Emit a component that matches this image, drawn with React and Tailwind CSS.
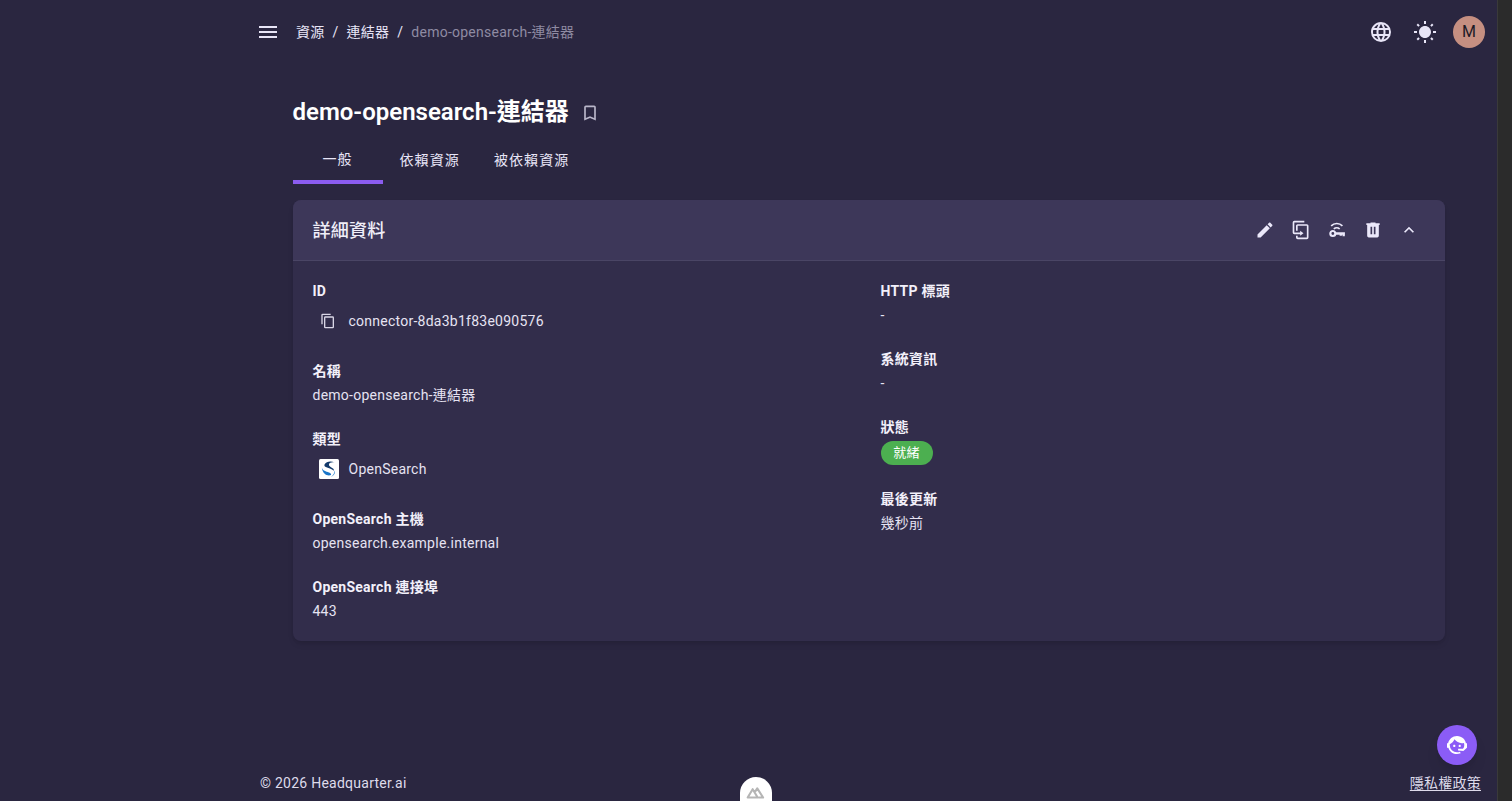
import React from 'react';

const FONT = "font-['Roboto','Noto_Sans_CJK_TC',sans-serif]";

const Mdi = ({ d, size = 24, className = '' }) => (
  <svg viewBox="0 0 24 24" width={size} height={size} fill="currentColor" className={className}>
    <path d={d} />
  </svg>
);

const paths = {
  menu: 'M3,6H21V8H3V6M3,11H21V13H3V11M3,16H21V18H3V16Z',
  web: 'M16.36,14C16.44,13.34 16.5,12.68 16.5,12C16.5,11.32 16.44,10.66 16.36,10H19.74C19.9,10.64 20,11.31 20,12C20,12.69 19.9,13.36 19.74,14M14.59,19.56C15.19,18.45 15.65,17.25 15.97,16H18.92C17.96,17.65 16.43,18.93 14.59,19.56M14.34,14H9.66C9.56,13.34 9.5,12.68 9.5,12C9.5,11.32 9.56,10.65 9.66,10H14.34C14.43,10.65 14.5,11.32 14.5,12C14.5,12.68 14.43,13.34 14.34,14M12,19.96C11.17,18.76 10.5,17.43 10.09,16H13.91C13.5,17.43 12.83,18.76 12,19.96M8,8H5.08C6.03,6.34 7.57,5.06 9.4,4.44C8.8,5.55 8.35,6.75 8,8M5.08,16H8C8.35,17.25 8.8,18.45 9.4,19.56C7.57,18.93 6.03,17.65 5.08,16M4.26,14C4.1,13.36 4,12.69 4,12C4,11.31 4.1,10.64 4.26,10H7.64C7.56,10.66 7.5,11.32 7.5,12C7.5,12.68 7.56,13.34 7.64,14M12,4.03C12.83,5.23 13.5,6.57 13.91,8H10.09C10.5,6.57 11.17,5.23 12,4.03M18.92,8H15.97C15.65,6.75 15.19,5.55 14.59,4.44C16.43,5.07 17.96,6.34 18.92,8M12,2C6.47,2 2,6.5 2,12A10,10 0 0,0 12,22A10,10 0 0,0 22,12A10,10 0 0,0 12,2Z',
  sun: 'M3.55 19.09L4.96 20.5L6.76 18.71L5.34 17.29M12 6C8.69 6 6 8.69 6 12S8.69 18 12 18 18 15.31 18 12C18 8.68 15.31 6 12 6M20 13H23V11H20M17.24 18.71L19.04 20.5L20.45 19.09L18.66 17.29M20.45 5L19.04 3.6L17.24 5.39L18.66 6.81M13 1H11V4H13M6.76 5.39L4.96 3.6L3.55 5L5.34 6.81L6.76 5.39M1 13H4V11H1M13 20H11V23H13',
  bookmark: 'M17,18L12,15.82L7,18V5H17M17,3H7A2,2 0 0,0 5,5V21L12,18L19,21V5C19,3.89 18.1,3 17,3Z',
  pencil: 'M20.71,7.04C21.1,6.65 21.1,6 20.71,5.63L18.37,3.29C18,2.9 17.35,2.9 16.96,3.29L15.12,5.12L18.87,8.87M3,17.25V21H6.75L17.81,9.93L14.06,6.18L3,17.25Z',
  duplicate: 'M11,17H4A2,2 0 0,1 2,15V3A2,2 0 0,1 4,1H16V3H4V15H11V13L15,16L11,19V17M19,21V7H8V13H6V7A2,2 0 0,1 8,5H19A2,2 0 0,1 21,7V21A2,2 0 0,1 19,23H8A2,2 0 0,1 6,21V19H8V21H19Z',
  trash: 'M9,3V4H4V6H5V19A2,2 0 0,0 7,21H17A2,2 0 0,0 19,19V6H20V4H15V3H9M9,8H11V17H9V8M13,8H15V17H13V8Z',
  chevron: 'M7.41,15.41L12,10.83L16.59,15.41L18,14L12,8L6,14L7.41,15.41Z',
  copy: 'M19,21H8V7H19M19,5H8A2,2 0 0,0 6,7V21A2,2 0 0,0 8,23H19A2,2 0 0,0 21,21V7A2,2 0 0,0 19,5M16,1H4A2,2 0 0,0 2,3V17H4V3H16V1Z',
  agent: 'M18.72,14.76C19.07,13.91 19.26,13 19.26,12C19.26,11.28 19.15,10.59 18.96,9.95C18.31,10.1 17.63,10.18 16.92,10.18C13.86,10.18 11.15,8.67 9.5,6.34C8.61,8.5 6.91,10.26 4.77,11.22C4.73,11.47 4.73,11.74 4.73,12A7.27,7.27 0 0,0 12,19.27C13.05,19.27 14.06,19.04 14.97,18.63C15.54,19.72 15.8,20.26 15.78,20.26C14.14,20.81 12.87,21.08 12,21.08C9.58,21.08 7.27,20.13 5.57,18.42C4.53,17.38 3.76,16.11 3.33,14.73H2V10.18H3.09C3.93,6.04 7.6,2.92 12,2.92C14.4,2.92 16.71,3.87 18.42,5.58C19.69,6.84 20.54,8.45 20.89,10.18H22V14.67V14.69L22,14.73H21.94L18.38,18L13.08,17.4V15.73H17.91L18.72,14.76M9.27,11.77C9.57,11.77 9.86,11.89 10.07,12.11C10.28,12.32 10.4,12.61 10.4,12.91C10.4,13.21 10.28,13.5 10.07,13.71C9.86,13.92 9.57,14.04 9.27,14.04C8.64,14.04 8.13,13.54 8.13,12.91C8.13,12.28 8.64,11.77 9.27,11.77M14.72,11.77C15.35,11.77 15.85,12.28 15.85,12.91C15.85,13.54 15.35,14.04 14.72,14.04C14.09,14.04 13.58,13.54 13.58,12.91A1.14,1.14 0 0,1 14.72,11.77Z',
};

const WifiKeyIcon = () => (
  <svg viewBox="0 0 24 24" width={20} height={20} fill="none" stroke="currentColor">
    <path strokeWidth="2" d="M5 7a9.500 9.500 0 0 1 13.500 0M8.200 10.800a5 5 0 0 1 7 0" />
    <circle cx="7" cy="16.200" r="3" strokeWidth="2.600" />
    <path strokeWidth="2.800" d="M10 16.200h11.500M20 16.200v3.400M16.500 16.200v2.600" />
  </svg>
);

const LABEL = 'text-sm font-bold leading-[20px] tracking-[0.25px] text-[#f2f0fa]';

const Field = ({ label, children, last = false }) => (
  <div className={last ? '' : 'mb-[24px]'}>
    <div className={LABEL}>{label}</div>
    <div className="mt-[4px] text-sm leading-[20px] tracking-[0.25px] text-[#e6e3f2]">{children}</div>
  </div>
);

const IconField = ({ label, icon, text }) => (
  <div className="mb-[24px]">
    <div className={LABEL}>{label}</div>
    <div className="mt-[4px] flex h-[32px] items-center pl-[7px] text-sm tracking-[0.25px] text-[#e6e3f2]">
      <span className="flex w-[29px] shrink-0 justify-start">{icon}</span>
      {text}
    </div>
  </div>
);

export default function App() {
  return (
    <div className={`flex h-[801px] w-[1512px] overflow-hidden bg-[#2a2640] ${FONT}`}>
      <div className="relative flex min-w-0 flex-1 flex-col pl-[245px]">
        {/* top bar */}
        <header className="flex h-[64px] shrink-0 items-center justify-between pl-[11px] pr-[12px] text-[#e8e5f7]">
          <div className="flex items-center">
            <Mdi d={paths.menu} />
            <nav className="ml-[16px] flex items-center text-sm tracking-[0.25px]">
              <span>資源</span>
              <span className="mx-[8px]">/</span>
              <span>連結器</span>
              <span className="mx-[8px]">/</span>
              <span className="text-[#8f8ba3]">demo-opensearch-連結器</span>
            </nav>
          </div>
          <div className="flex items-center">
            <Mdi d={paths.web} />
            <Mdi d={paths.sun} className="ml-[20px]" />
            <div className="ml-[16px] flex h-[32px] w-[32px] items-center justify-center rounded-full bg-[#c58f81] text-base text-[#1c1a26]">M</div>
          </div>
        </header>

        <main className="flex-1 pl-[47.5px] pr-[52px]">
          <div className="mt-[32px] flex items-center">
            <h1 className="text-2xl font-semibold leading-[32px] text-white">demo-opensearch-連結器</h1>
            <Mdi d={paths.bookmark} size={20} className="ml-[11px] mt-[2px] text-[#b9b6c9]" />
          </div>

          {/* tabs */}
          <div className="mt-[8px] flex h-[48px] text-sm tracking-[1.1px] text-[#e8e5f7]">
            <div className="flex w-[90px] items-center justify-center border-b-[4px] border-[#8b5cf0] pt-[2px]">一般</div>
            <div className="flex items-center px-[17px] pb-[1px]">依賴資源</div>
            <div className="flex items-center pl-[17px] pb-[1px]">被依賴資源</div>
          </div>

          {/* detail card */}
          <section className="mt-[16px] overflow-hidden rounded-[8px] bg-[#322d4b] shadow-md">
            <div className="flex h-[61px] items-center justify-between border-b border-[#4a4565] bg-[#3d3759] pl-[20px] pr-[26px]">
              <h2 className="pt-[1px] text-lg font-medium tracking-[0.25px] text-[#f0eef8]">詳細資料</h2>
              <div className="flex items-center gap-[16px] text-[#ebe8fa]">
                <Mdi d={paths.pencil} size={20} />
                <Mdi d={paths.duplicate} size={20} />
                <WifiKeyIcon />
                <Mdi d={paths.trash} size={20} />
                <Mdi d={paths.chevron} size={20} />
              </div>
            </div>
            <div className="grid grid-cols-[568px_1fr] pb-[20px] pl-[20px] pt-[20px]">
              <div>
                <IconField label="ID" icon={<Mdi d={paths.copy} size={16} className="text-[#d9d6e6]" />} text="connector-8da3b1f83e090576" />
                <Field label="名稱">demo-opensearch-連結器</Field>
                <IconField
                  label="類型"
                  icon={
                    <svg viewBox="0 0 20 20" width={20} height={20} className="-ml-[1px]">
                      <rect width="20" height="20" rx="1.500" fill="#fff" />
                      <path d="M5.500 5.500C7 2.500 12 1.500 15.500 3.500 12.500 3 10.500 3.800 10 5.200 9.500 7 12 8 14 9.500 14.800 10.200 15 11 14.700 11.800 13 9.500 9 9 6.800 8 5.500 7.400 5.200 6.500 5.500 5.500z" fill="#123a6b" />
                      <path d="M2.800 8.500C3.500 11.500 7 12.500 10 13.500 11.800 14.200 12.300 15 12 16 9 17.500 3.500 15.500 2.800 8.500z" fill="#1976c9" />
                      <path d="M15.500 11.500C16.500 13.500 15.500 16.500 12 17.800 14.500 16 15.500 14 15.500 11.500z" fill="#1976c9" />
                    </svg>
                  }
                  text="OpenSearch"
                />
                <Field label="OpenSearch 主機">opensearch.example.internal</Field>
                <Field label="OpenSearch 連接埠" last>443</Field>
              </div>
              <div>
                <Field label="HTTP 標頭">-</Field>
                <Field label="系統資訊">-</Field>
                <div className="mb-[24px]">
                  <div className={LABEL}>狀態</div>
                  <span className="mt-[4px] flex h-[24px] w-[52px] items-center justify-center rounded-full bg-[#4caf50] text-[13px] tracking-[0.25px] text-white">就緒</span>
                </div>
                <Field label="最後更新" last>幾秒前</Field>
              </div>
            </div>
          </section>
        </main>

        {/* footer */}
        <footer className="flex h-[36px] shrink-0 items-center justify-between pl-[15px] pr-[16px] text-sm tracking-[0.25px] text-[#dedbeb]">
          <span>© 2026 Headquarter.ai</span>
          <span className="underline underline-offset-2">隱私權政策</span>
        </footer>

        {/* chat button */}
        <button className="absolute bottom-[36px] right-[20px] flex h-[40px] w-[40px] items-center justify-center rounded-full bg-[#8b5cf6] text-white shadow-lg">
          <Mdi d={paths.agent} />
        </button>

        {/* nuxt devtools tab */}
        <div className="absolute bottom-0 left-[740px] flex h-[24px] w-[32px] justify-center rounded-t-full bg-white pt-[8px]">
          <svg viewBox="0 0 24 18" width={20} height={15} fill="none" stroke="#b5b5b5" strokeWidth="2.500" strokeLinejoin="round">
            <path d="M2 15l6-10 6 10zM11 8l2.500-4 7 11H15" />
          </svg>
        </div>
      </div>

      {/* scrollbar track */}
      <div className="w-[15px] shrink-0 border-l border-[#3a3a3a] bg-[#2b2b2b]" />
    </div>
  );
}
